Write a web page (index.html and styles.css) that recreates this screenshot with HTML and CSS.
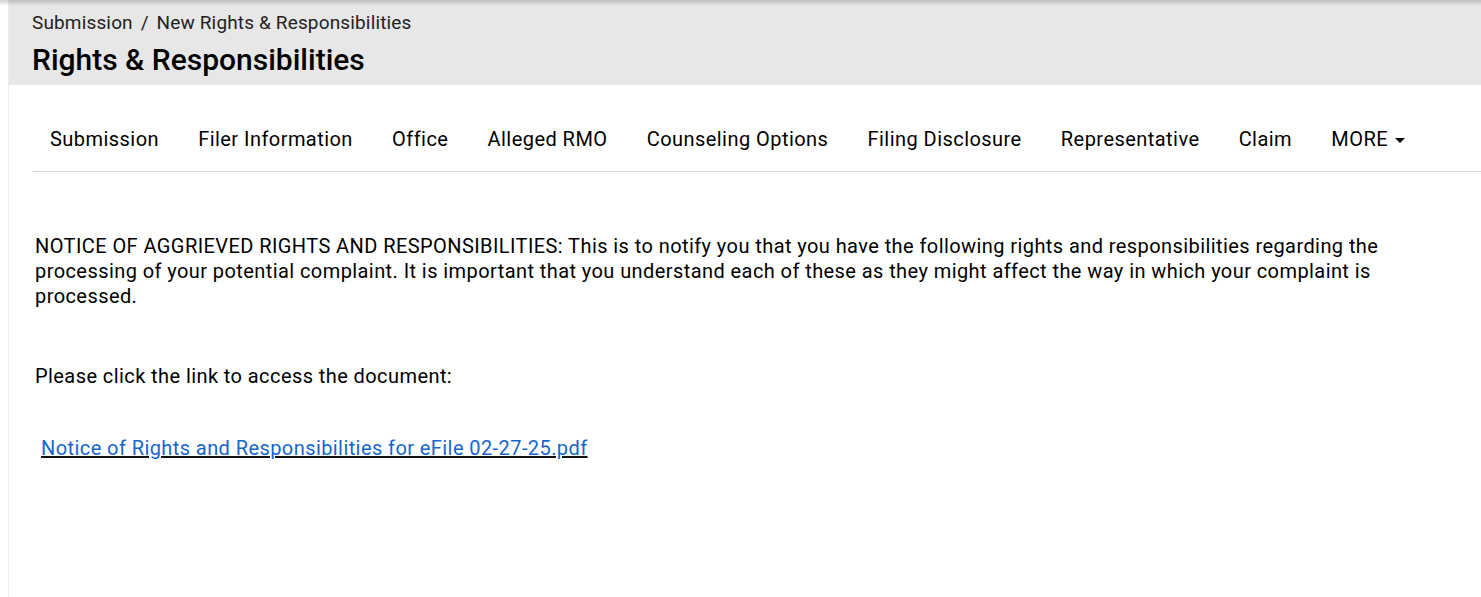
FILE: index.html
```html
<!DOCTYPE html>
<html>
<head>
  <title>Rights &amp; Responsibilities</title>
  <meta name="viewport" content="width=device-width, initial-scale=1.0">
  <link rel="stylesheet" href="styles.css">
</head>
<body>

<div class="page">
  <div class="page-header">
    <div class="breadcrumb">
      <span>Submission</span>
      <span class="sep">/</span>
      <span>New Rights &amp; Responsibilities</span>
    </div>
    <h1>Rights &amp; Responsibilities</h1>
  </div>

  <div class="content">
    <ul class="tabs">
      <li><a href="#">Submission</a></li>
      <li><a href="#">Filer Information</a></li>
      <li><a href="#">Office</a></li>
      <li><a href="#">Alleged RMO</a></li>
      <li><a href="#">Counseling Options</a></li>
      <li><a href="#">Filing Disclosure</a></li>
      <li><a href="#">Representative</a></li>
      <li><a href="#">Claim</a></li>
      <li><a href="#" class="more">MORE <span class="caret"></span></a></li>
    </ul>

    <div class="notice">
      <p>NOTICE OF AGGRIEVED RIGHTS AND RESPONSIBILITIES: This is to notify you that you have the following rights and responsibilities regarding the processing of your potential complaint. It is important that you understand each of these as they might affect the way in which your complaint is processed.</p>
      <p class="prompt">Please click the link to access the document:</p>
      <p class="doc"><a href="#">Notice of Rights and Responsibilities for eFile 02-27-25.pdf</a></p>
    </div>
  </div>
</div>

</body>
</html>
```

FILE: styles.css
```css
* {
  margin: 0;
  padding: 0;
  box-sizing: border-box;
}

body {
  font-family: Roboto, "Liberation Sans", sans-serif;
  color: #000;
  background: #fff;
  height: 100vh;
  overflow: hidden;
  position: relative;
}

/* soft shadow along the top edge */
body::before {
  content: "";
  position: absolute;
  top: 0;
  left: 0;
  right: 0;
  height: 6px;
  background: linear-gradient(rgba(0, 0, 0, 0.18), rgba(0, 0, 0, 0));
  z-index: 2;
}

.page {
  margin-left: 8px;
  height: 100%;
  border-left: 1px solid #ececec;
}

.page-header {
  background: #e7e7e7;
  height: 85px;
  padding: 11px 23px 0;
}

.breadcrumb {
  font-size: 19px;
  letter-spacing: 0.15px;
  color: #222;
  line-height: 24px;
}

.breadcrumb .sep {
  margin: 0 3px;
}

h1 {
  font-size: 30px;
  font-weight: 500;
  line-height: 36px;
  margin-top: 7px;
}

.content {
  padding-left: 24px;
}

.tabs {
  list-style: none;
  display: flex;
  align-items: center;
  height: 65px;
  margin-top: 22px;
  border-bottom: 1px solid #d3d3d3;
}

.tabs a {
  display: block;
  padding: 0 19.6px;
  font-size: 20px;
  letter-spacing: 0.45px;
  color: #000;
  text-decoration: none;
}

.tabs li:first-child a {
  padding-left: 17px;
}

.caret {
  display: inline-block;
  width: 0;
  height: 0;
  border-left: 5px solid transparent;
  border-right: 5px solid transparent;
  border-top: 5px solid #000;
  vertical-align: middle;
  margin-left: 2px;
}

.notice {
  padding: 62px 40px 0 2px;
  font-size: 20px;
  line-height: 25px;
  letter-spacing: 0.42px;
}

.prompt {
  margin-top: 55px;
}

.doc {
  margin-top: 47px;
  padding-left: 6px;
}

.doc a {
  color: #1565d0;
  text-decoration-color: #111;
}
```
